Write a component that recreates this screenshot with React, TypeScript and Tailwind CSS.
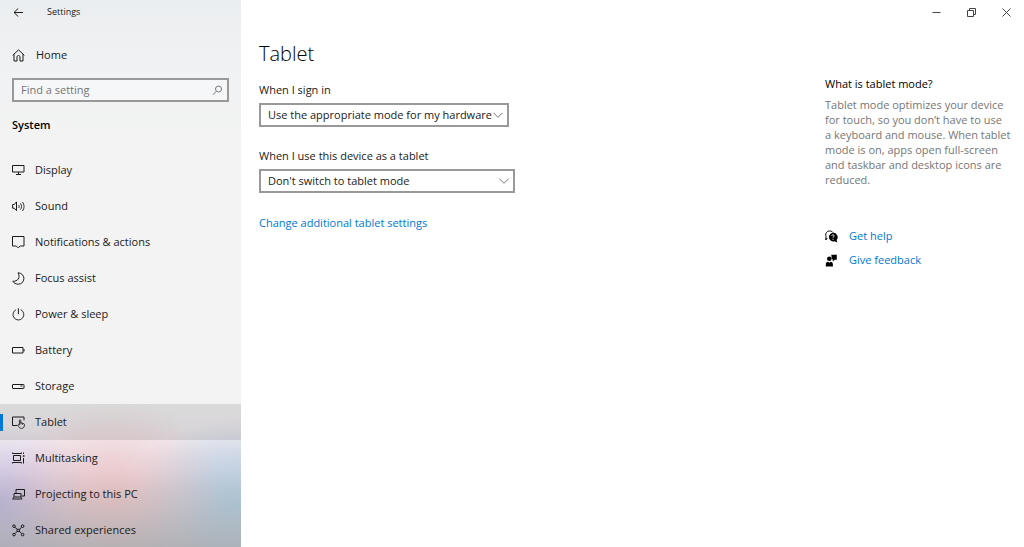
import React, { useState } from 'react';
import clsx from 'clsx';

type IconProps = { children: React.ReactNode };

const Icon: React.FC<IconProps> = ({ children }) => (
  <svg className="h-[13px] w-[13px] shrink-0" viewBox="0 0 13 13" fill="none" stroke="currentColor" aria-hidden="true">
    {children}
  </svg>
);

const navItems = [
  {
    label: 'Display',
    icon: (
      <>
        <path d="M.5 1.500h11.500v6.500H.5z" />
        <path d="M6.500 8v2.500M4 10.500h5" />
      </>
    ),
  },
  {
    label: 'Sound',
    icon: (
      <>
        <path d="M.6 4.500h1.600l2.300-2.600v8.700L2.200 8.200H.6z" />
        <path d="M6.700 5c.6.9.6 2.100 0 3M8.400 3.400c1.500 1.800 1.500 4.400 0 6.200M10.300 1.900c2.300 2.700 2.300 6.500 0 9.200" strokeWidth=".9" />
      </>
    ),
  },
  {
    label: 'Notifications & actions',
    icon: <path d="M.5.500h11.500v9.500H8.200L6.200 11.900 4.300 10H.5z" />,
  },
  {
    label: 'Focus assist',
    icon: <path d="M6 .8C9.600 1 11.900 3.400 11.900 6.500c0 3.300-2.500 5.700-5.600 5.700C3.800 12.200 1.800 11 .8 9.300 5.500 9.500 8.800 6 6 .8z" />,
  },
  {
    label: 'Power & sleep',
    icon: (
      <>
        <path d="M4.100 1.700a5.400 5.400 0 1 0 4.600 0" strokeWidth=".9" />
        <path d="M6.400.3v5.900" />
      </>
    ),
  },
  {
    label: 'Battery',
    icon: (
      <>
        <path d="M.5 3.500h10.500v5.500H.5z" />
        <path d="M12 5v2.500" />
      </>
    ),
  },
  {
    label: 'Storage',
    icon: (
      <>
        <rect x=".5" y="4.500" width="11.500" height="4" rx=".5" />
        <path d="M8.500 6h2" />
      </>
    ),
  },
  {
    label: 'Tablet',
    icon: (
      <>
        <path d="M5 9.500H.5v-8.500h11.500v3.300" />
        <path d="M7.400 8.500V4.500c0-1 1.400-1 1.400 0v2.300l2.700.7c.6.2.9.6.9 1.200 0 2.400-.9 3.700-2.900 3.700-1.700 0-2.400-1-3.900-3.400.5-.7 1.200-.6 1.800 0z" strokeWidth=".9" />
        <path d="M8.800 6.500v2M10.500 7.300v1.500" strokeWidth=".7" />
      </>
    ),
  },
  {
    label: 'Multitasking',
    icon: (
      <>
        <path d="M1.500 3.500h7v5h-7zM.5.500v1h9v-1M.5 11.500v-1h9v1" />
        <path d="M11.500.5v1.500M11.500 6v5.500" />
        <path d="M10.800 4h1.700" strokeWidth="1.500" />
      </>
    ),
  },
  {
    label: 'Projecting to this PC',
    icon: (
      <>
        <path d="M4 5v-3.500h8.500v6.500H9.500" />
        <path d="M2 5.500h7v3.500H2zM.5 11h9.500" />
        <path d="M1.800 9 .6 11M9 9l1 2" strokeWidth=".8" />
      </>
    ),
  },
  {
    label: 'Shared experiences',
    icon: (
      <>
        <circle cx="2" cy="2.200" r="1.300" />
        <circle cx="10.600" cy="2.200" r="1.300" />
        <circle cx="2" cy="10.600" r="1.300" />
        <circle cx="10.600" cy="10.600" r="1.300" />
        <path d="M3 3.200 5 5.300h2.600l2-2.100M3 9.600 5 7.500h2.600l2 2.100M5 5.300v2.200M7.600 5.300v2.200" />
      </>
    ),
  },
];

const Sidebar: React.FC = () => {
  const [active, setActive] = useState('Tablet');

  return (
    <aside className="flex w-[241px] shrink-0 flex-col overflow-hidden bg-[linear-gradient(to_bottom,transparent_470px,rgba(160,164,164,0.6)_547px),radial-gradient(ellipse_110px_95px_at_112px_495px,rgba(238,194,194,0.9),rgba(238,194,194,0.4)_50%,transparent),radial-gradient(ellipse_100px_80px_at_0px_505px,rgba(190,180,222,0.9),rgba(190,180,222,0.4)_50%,transparent),radial-gradient(ellipse_110px_85px_at_235px_505px,rgba(175,203,222,1),rgba(180,203,222,0.5)_60%,transparent),linear-gradient(to_bottom,#ebeef0_0px,#f1f2f3_80px,#f3f3f3_180px,#f3f3f3_405px,#f1ebf1_445px,#dfd5df_490px,#cfc6d2_547px)]">
      <div className="flex h-6 shrink-0 items-center gap-[23px] pl-[13px]">
        <button type="button" aria-label="Back">
          <svg className="h-[11px] w-[11px]" viewBox="0 0 11 11" fill="none" stroke="currentColor" aria-hidden="true">
            <path d="M5.200 1.500 1 5.500 5.200 9.500M1 5.500h9" />
          </svg>
        </button>
        <span className="text-[9px]">Settings</span>
      </div>

      <a href="#home" className="mt-3 flex h-[38px] shrink-0 items-center gap-[11px] pl-3">
        <Icon>
          <path d="M.7 6.300 6.500.9l5.800 5.400M2 5.300v6.700h3V8c0-2 3-2 3 0v4h3V5.300" />
        </Icon>
        Home
      </a>

      <label className="mx-3 mt-1 flex h-6 shrink-0 items-center border-2 border-[#999] bg-white/40 pr-1 pl-[7px]">
        <input
          type="text"
          aria-label="Find a setting"
          placeholder="Find a setting"
          className="min-w-0 flex-1 bg-transparent outline-none placeholder:text-[#757575]"
        />
        <svg className="h-[11px] w-[11px] text-[#777]" viewBox="0 0 11 11" fill="none" stroke="currentColor" aria-hidden="true">
          <circle cx="6.500" cy="4" r="3" />
          <path d="M4.300 6.200.9 9.800" />
        </svg>
      </label>

      <h2 className="mt-[11px] h-[39px] shrink-0 pl-3 leading-6 font-semibold text-black">System</h2>

      <nav className="flex flex-col">
        {navItems.map((item) => (
          <a
            key={item.label}
            href="#settings"
            onClick={() => setActive(item.label)}
            className={clsx('relative flex h-9 shrink-0 items-center gap-2.5 pl-3', active === item.label && 'bg-black/10')}
          >
            {active === item.label && <span className="absolute left-0 h-[17px] w-[3px] bg-[#0078d7]" />}
            <Icon>{item.icon}</Icon>
            {item.label}
          </a>
        ))}
      </nav>
    </aside>
  );
};

type SelectFieldProps = {
  id: string;
  label: string;
  options: string[];
  className: string;
};

const SelectField: React.FC<SelectFieldProps> = ({ id, label, options, className }) => (
  <div className="flex flex-col items-start gap-1">
    <label htmlFor={id} className="leading-[18px]">{label}</label>
    <div className={clsx('grid items-center', className)}>
      <select id={id} className="col-start-1 row-start-1 h-6 w-full appearance-none border-2 border-[#999] bg-white pl-[7px]">
        {options.map((option) => (
          <option key={option}>{option}</option>
        ))}
      </select>
      <svg className="pointer-events-none col-start-1 row-start-1 mr-1.5 h-2.5 w-2.5 justify-self-end text-[#777]" viewBox="0 0 10 10" fill="none" stroke="currentColor" aria-hidden="true">
        <path d="M.5 2.800 5 7.300 9.500 2.800" />
      </svg>
    </div>
  </div>
);

const WindowControls: React.FC = () => (
  <div className="flex h-6 shrink-0 justify-end text-[#444]">
    <button type="button" aria-label="Minimize" className="flex w-[35px] items-center justify-center">
      <svg className="h-[9px] w-[9px]" viewBox="0 0 9 9" fill="none" stroke="currentColor"><path d="M.5 4.500h8" /></svg>
    </button>
    <button type="button" aria-label="Restore" className="flex w-[35px] items-center justify-center">
      <svg className="h-[9px] w-[9px]" viewBox="0 0 9 9" fill="none" stroke="currentColor"><path d="M.5 2.500h6v6h-6zM2.500 2.500v-2h6v6h-2" /></svg>
    </button>
    <button type="button" aria-label="Close" className="flex w-[35px] items-center justify-center">
      <svg className="h-[9px] w-[9px]" viewBox="0 0 9 9" fill="none" stroke="currentColor"><path d="m.5.5 8 8M8.500.5l-8 8" /></svg>
    </button>
  </div>
);

const HelpPanel: React.FC = () => (
  <aside className="w-[199px] shrink-0 pt-[52px]">
    <h2 className="leading-4 text-black">What is tablet mode?</h2>
    <p className="mt-[5px] pr-3 leading-[15px] text-[#767676]">
      Tablet mode optimizes your device for touch, so you don’t have to use
      <br />
      a keyboard and mouse. When tablet mode is on, apps open full-screen and taskbar and desktop icons are reduced.
    </p>
    <div className="mt-[37px] flex flex-col text-[#0078d7]">
      <a href="#help" className="flex h-6 items-center gap-[11px]">
        <svg className="h-[13px] w-[13px] text-black" viewBox="0 0 13 13" fill="none" stroke="currentColor" aria-hidden="true">
          <path d="M2.200 8 .8 10l.2-3.600C0 3.500 1.800 1 4.600 1c1.500 0 2.700.6 3.400 1.500" />
          <path d="M8 2.800a4.300 4.300 0 1 0 1.500 8.400l2.800 1.300-.7-2.600A4.300 4.300 0 0 0 8 2.800z" fill="currentColor" stroke="none" />
          <path d="M6.700 5.800c.1-1.500 2.600-1.300 2.400.1-.1.900-1.100.9-1.100 1.900M8 8.800v1" stroke="white" strokeWidth=".9" />
        </svg>
        Get help
      </a>
      <a href="#feedback" className="flex h-6 items-center gap-[11px]">
        <svg className="h-[13px] w-[13px] text-black" viewBox="0 0 13 13" fill="currentColor" aria-hidden="true">
          <circle cx="4.300" cy="4.800" r="2.300" />
          <path d="M.8 12.500v-2c0-1.600 1-2.700 2.300-2.700l1.300 1 1.200-1c1.300 0 2.300 1.100 2.300 2.700v2zM6.300.8h5.500v5H9.800L7.800 7.500V5.500l-1-.5z" />
        </svg>
        Give feedback
      </a>
    </div>
  </aside>
);

const App: React.FC = () => (
  <div className="flex h-screen overflow-hidden bg-white font-['Open_Sans','Noto_Sans',sans-serif] text-[11px] text-[#1a1a1a]">
    <Sidebar />
    <div className="flex min-w-0 flex-1 flex-col">
      <WindowControls />
      <div className="flex flex-1 justify-between pl-[18px]">
        <main className="flex flex-col items-start pt-4">
          <h1 className="text-[20px] leading-7 font-light text-black">Tablet</h1>
          <div className="mt-[13px] flex flex-col gap-5">
            <SelectField
              id="sign-in-mode"
              label="When I sign in"
              className="w-[250px]"
              options={['Use the appropriate mode for my hardware', 'Always use tablet mode', 'Never use tablet mode']}
            />
            <SelectField
              id="tablet-use"
              label="When I use this device as a tablet"
              className="w-[256px]"
              options={["Don't switch to tablet mode", 'Ask me before switching modes', 'Always switch to tablet mode']}
            />
          </div>
          <a href="#additional" className="mt-[21px] leading-[18px] text-[#0078d7]">Change additional tablet settings</a>
        </main>
        <HelpPanel />
      </div>
    </div>
  </div>
);

export default App;
